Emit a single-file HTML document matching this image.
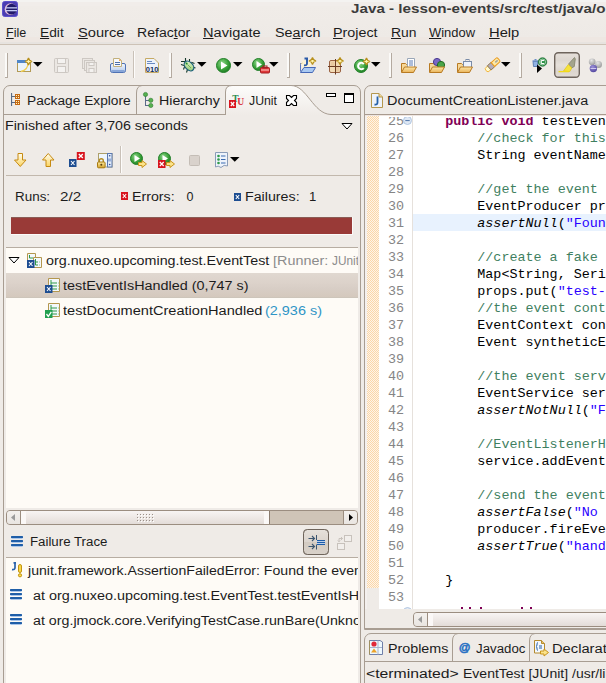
<!DOCTYPE html><html><head><meta charset="utf-8"><style>
html,body{margin:0;padding:0;}
body{width:606px;height:683px;overflow:hidden;position:relative;background:#efebe7;font-family:"Liberation Sans",sans-serif;}
</style></head><body>
<div style="position:absolute;left:0px;top:0px;width:606px;height:2px;background:#f4f3f1"></div>
<div style="position:absolute;left:0px;top:2px;width:606px;height:4px;background:#f1edea"></div>
<div style="position:absolute;left:0px;top:6px;width:606px;height:31px;background:linear-gradient(#f0ece8,#eeeae6)"></div>
<div style="position:absolute;left:0px;top:37px;width:606px;height:5px;background:#eee7e2"></div>
<div style="position:absolute;left:0px;top:42px;width:606px;height:2px;background:#e7e3df"></div>
<div style="position:absolute;left:0px;top:44px;width:606px;height:1px;background:#cdc2b6"></div>
<div style="position:absolute;left:0px;top:45px;width:606px;height:40px;background:#efebe7"></div>
<svg style="position:absolute;left:2px;top:1px;overflow:visible;" width="16" height="16" viewBox="0 0 16 16"><rect x="0.5" y="0.5" width="15" height="15" rx="2.2" fill="#4a3db2" stroke="#5d52cc"/>
<circle cx="8.6" cy="8.2" r="5.9" fill="#e4bcd6"/><circle cx="9.6" cy="8.2" r="5.4" fill="#211a6c"/>
<rect x="3.6" y="6.2" width="11.4" height="1.3" fill="#c3caf4"/><rect x="3.6" y="9" width="11.4" height="1.3" fill="#c3caf4"/></svg>
<div style="position:absolute;left:351.10px;top:1px;font-family:'Liberation Sans';font-size:12.5px;line-height:16px;font-weight:700;font-style:normal;color:#3c3c3c;white-space:pre;transform-origin:0 0;transform:scaleX(1.2169);">Java - lesson-events/src/test/java/org/nuxeo/upcoming/test/EventTest.java - Eclipse</div>
<div style="position:absolute;left:6.29px;top:25px;font-family:'Liberation Sans';font-size:12.5px;line-height:16px;font-weight:400;font-style:normal;color:#1c1c1c;white-space:pre;transform-origin:0 0;transform:scaleX(1.0053);"><span style="text-decoration:underline;text-decoration-thickness:1px;text-underline-offset:0.6px">F</span>ile</div>
<div style="position:absolute;left:40.20px;top:25px;font-family:'Liberation Sans';font-size:12.5px;line-height:16px;font-weight:400;font-style:normal;color:#1c1c1c;white-space:pre;transform-origin:0 0;transform:scaleX(1.1000);"><span style="text-decoration:underline;text-decoration-thickness:1px;text-underline-offset:0.6px">E</span>dit</div>
<div style="position:absolute;left:78.03px;top:25px;font-family:'Liberation Sans';font-size:12.5px;line-height:16px;font-weight:400;font-style:normal;color:#1c1c1c;white-space:pre;transform-origin:0 0;transform:scaleX(1.1737);"><span style="text-decoration:underline;text-decoration-thickness:1px;text-underline-offset:0.6px">S</span>ource</div>
<div style="position:absolute;left:136.87px;top:25px;font-family:'Liberation Sans';font-size:12.5px;line-height:16px;font-weight:400;font-style:normal;color:#1c1c1c;white-space:pre;transform-origin:0 0;transform:scaleX(1.1261);">Refac<span style="text-decoration:underline;text-decoration-thickness:1px;text-underline-offset:0.6px">t</span>or</div>
<div style="position:absolute;left:202.83px;top:25px;font-family:'Liberation Sans';font-size:12.5px;line-height:16px;font-weight:400;font-style:normal;color:#1c1c1c;white-space:pre;transform-origin:0 0;transform:scaleX(1.1667);"><span style="text-decoration:underline;text-decoration-thickness:1px;text-underline-offset:0.6px">N</span>avigate</div>
<div style="position:absolute;left:274.75px;top:25px;font-family:'Liberation Sans';font-size:12.5px;line-height:16px;font-weight:400;font-style:normal;color:#1c1c1c;white-space:pre;transform-origin:0 0;transform:scaleX(1.1474);">Se<span style="text-decoration:underline;text-decoration-thickness:1px;text-underline-offset:0.6px">a</span>rch</div>
<div style="position:absolute;left:332.56px;top:25px;font-family:'Liberation Sans';font-size:12.5px;line-height:16px;font-weight:400;font-style:normal;color:#1c1c1c;white-space:pre;transform-origin:0 0;transform:scaleX(1.1447);"><span style="text-decoration:underline;text-decoration-thickness:1px;text-underline-offset:0.6px">P</span>roject</div>
<div style="position:absolute;left:390.89px;top:25px;font-family:'Liberation Sans';font-size:12.5px;line-height:16px;font-weight:400;font-style:normal;color:#1c1c1c;white-space:pre;transform-origin:0 0;transform:scaleX(1.1095);"><span style="text-decoration:underline;text-decoration-thickness:1px;text-underline-offset:0.6px">R</span>un</div>
<div style="position:absolute;left:428.90px;top:25px;font-family:'Liberation Sans';font-size:12.5px;line-height:16px;font-weight:400;font-style:normal;color:#1c1c1c;white-space:pre;transform-origin:0 0;transform:scaleX(1.0356);"><span style="text-decoration:underline;text-decoration-thickness:1px;text-underline-offset:0.6px">W</span>indow</div>
<div style="position:absolute;left:488.92px;top:25px;font-family:'Liberation Sans';font-size:12.5px;line-height:16px;font-weight:400;font-style:normal;color:#1c1c1c;white-space:pre;transform-origin:0 0;transform:scaleX(1.1792);"><span style="text-decoration:underline;text-decoration-thickness:1px;text-underline-offset:0.6px">H</span>elp</div>
<div style="position:absolute;left:5px;top:53px;width:2px;height:24px;background:#fbfaf8;border-right:1px solid #b4aaa0;border-bottom:1px solid #b4aaa0"></div>
<div style="position:absolute;left:169px;top:53px;width:2px;height:24px;background:#fbfaf8;border-right:1px solid #b4aaa0;border-bottom:1px solid #b4aaa0"></div>
<div style="position:absolute;left:287px;top:53px;width:2px;height:24px;background:#fbfaf8;border-right:1px solid #b4aaa0;border-bottom:1px solid #b4aaa0"></div>
<div style="position:absolute;left:389px;top:53px;width:2px;height:24px;background:#fbfaf8;border-right:1px solid #b4aaa0;border-bottom:1px solid #b4aaa0"></div>
<div style="position:absolute;left:519px;top:53px;width:2px;height:24px;background:#fbfaf8;border-right:1px solid #b4aaa0;border-bottom:1px solid #b4aaa0"></div>
<div style="position:absolute;left:133px;top:51px;width:1px;height:27px;background:#c9c1b8"></div>
<div style="position:absolute;left:134px;top:51px;width:1px;height:27px;background:#fdfcfb"></div>
<div style="position:absolute;left:3px;top:85px;width:358px;height:620px;border:1px solid #a89d92;border-radius:7px 7px 0 0;box-sizing:border-box;background:#efebe7"></div>
<div style="position:absolute;left:4px;top:114px;width:221px;height:1px;background:#a89d92"></div>
<div style="position:absolute;left:331px;top:114px;width:29px;height:1px;background:#a89d92"></div>
<svg style="position:absolute;left:225px;top:85px;overflow:visible;" width="110" height="30" viewBox="0 0 110 30"><defs><linearGradient id="ag" x1="0" y1="0" x2="0" y2="1"><stop offset="0" stop-color="#fdfcfb"/><stop offset="1" stop-color="#efebe7"/></linearGradient></defs><path d="M0.5 30 L0.5 7 Q0.5 0.5 7 0.5 L66 0.5 C82 0.5 88 29 106 29.5 L110 29.5 L110 30 Z" fill="url(#ag)"/><path d="M0.5 30 L0.5 7 Q0.5 0.5 7 0.5 L66 0.5 C82 0.5 88 29 106 29.5 L110 29.5" fill="none" stroke="#a89d92"/></svg>
<svg style="position:absolute;left:136px;top:85px;overflow:visible;" width="8" height="30" viewBox="0 0 8 30"><path d="M0.5 30 L0.5 8 Q0.5 1 6 0.5" fill="none" stroke="#a89d92"/></svg>
<div style="position:absolute;left:26.60px;top:93px;font-family:'Liberation Sans';font-size:12.5px;line-height:16px;font-weight:400;font-style:normal;color:#1c1c1c;white-space:pre;transform-origin:0 0;transform:scaleX(1.0968);">Package Explore</div>
<div style="position:absolute;left:159.46px;top:93px;font-family:'Liberation Sans';font-size:12.5px;line-height:16px;font-weight:400;font-style:normal;color:#1c1c1c;white-space:pre;transform-origin:0 0;transform:scaleX(1.1377);">Hierarchy</div>
<div style="position:absolute;left:248.50px;top:93px;font-family:'Liberation Sans';font-size:12.5px;line-height:16px;font-weight:400;font-style:normal;color:#1c1c1c;white-space:pre;transform-origin:0 0;transform:scaleX(0.9828);">JUnit</div>
<svg style="position:absolute;left:286px;top:95px;overflow:visible;" width="11" height="11" viewBox="0 0 11 11"><path d="M0.5 0.5 L3.5 0.5 L5.5 2.5 L7.5 0.5 L10.5 0.5 L10.5 3.5 L8.5 5.5 L10.5 7.5 L10.5 10.5 L7.5 10.5 L5.5 8.5 L3.5 10.5 L0.5 10.5 L0.5 7.5 L2.5 5.5 L0.5 3.5 Z" fill="#fff" stroke="#000" stroke-width="1.1"/></svg>
<div style="position:absolute;left:326px;top:93px;width:10px;height:4px;border:1px solid #000;background:#fff;box-sizing:border-box"></div>
<div style="position:absolute;left:344px;top:93px;width:10px;height:10px;border:1px solid #000;border-top-width:2px;background:#fff;box-sizing:border-box"></div>
<div style="position:absolute;left:5.16px;top:118px;font-family:'Liberation Sans';font-size:12.5px;line-height:16px;font-weight:400;font-style:normal;color:#1c1c1c;white-space:pre;transform-origin:0 0;transform:scaleX(1.1396);">Finished after 3,706 seconds</div>
<svg style="position:absolute;left:341px;top:123px;overflow:visible;" width="12" height="7" viewBox="0 0 12 7"><path d="M1 0.5 L11 0.5 L6 6 Z" fill="#fff" stroke="#000"/></svg>
<div style="position:absolute;left:6px;top:175px;width:354px;height:1px;background:#c2b8ad"></div>
<div style="position:absolute;left:120px;top:146px;width:1px;height:27px;background:#c9c1b8"></div>
<div style="position:absolute;left:121px;top:146px;width:1px;height:27px;background:#fdfcfb"></div>
<div style="position:absolute;left:15.13px;top:189px;font-family:'Liberation Sans';font-size:12.5px;line-height:16px;font-weight:400;font-style:normal;color:#1c1c1c;white-space:pre;transform-origin:0 0;transform:scaleX(1.0742);">Runs:</div>
<div style="position:absolute;left:60.19px;top:189px;font-family:'Liberation Sans';font-size:12.5px;line-height:16px;font-weight:400;font-style:normal;color:#1c1c1c;white-space:pre;transform-origin:0 0;transform:scaleX(1.2125);">2/2</div>
<div style="position:absolute;left:132.26px;top:189px;font-family:'Liberation Sans';font-size:12.5px;line-height:16px;font-weight:400;font-style:normal;color:#1c1c1c;white-space:pre;transform-origin:0 0;transform:scaleX(1.1361);">Errors:</div>
<div style="position:absolute;left:186.60px;top:189px;font-family:'Liberation Sans';font-size:12.5px;line-height:16px;font-weight:400;font-style:normal;color:#1c1c1c;white-space:pre;transform-origin:0 0;transform:scaleX(1.0000);">0</div>
<div style="position:absolute;left:244.56px;top:189px;font-family:'Liberation Sans';font-size:12.5px;line-height:16px;font-weight:400;font-style:normal;color:#1c1c1c;white-space:pre;transform-origin:0 0;transform:scaleX(1.1391);">Failures:</div>
<div style="position:absolute;left:308.65px;top:189px;font-family:'Liberation Sans';font-size:12.5px;line-height:16px;font-weight:400;font-style:normal;color:#1c1c1c;white-space:pre;transform-origin:0 0;transform:scaleX(1.0500);">1</div>
<div style="position:absolute;left:11px;top:217px;width:341px;height:17px;background:#993a37;border-top:1px solid #8a5c55;box-sizing:border-box"></div>
<div style="position:absolute;left:11px;top:234px;width:342px;height:1px;background:#fbfaf9"></div>
<div style="position:absolute;left:352px;top:217px;width:1px;height:18px;background:#fbfaf9"></div>
<div style="position:absolute;left:6px;top:247px;width:352px;height:1px;background:#b7ada2"></div>
<div style="position:absolute;left:6px;top:248px;width:352px;height:260px;background:#fefbf6"></div>
<div style="position:absolute;left:6px;top:273px;width:352px;height:25px;background:linear-gradient(#e0d8d0,#dcd2ca 40%,#d8cec6 60%,#d4c8bc)"></div>
<div style="position:absolute;left:6px;top:297px;width:352px;height:1px;background:#cdc5ba"></div>
<div style="position:absolute;left:45.50px;top:253px;font-family:'Liberation Sans';font-size:12.5px;line-height:16px;font-weight:400;font-style:normal;color:#1c1c1c;white-space:pre;transform-origin:0 0;transform:scaleX(1.1436);">org.nuxeo.upcoming.test.EventTest</div>
<div style="position:absolute;left:6px;top:248px;width:352px;height:260px;overflow:hidden"><div style="position:absolute;left:267.45px;top:5px;font-family:'Liberation Sans';font-size:12.5px;line-height:16px;font-weight:400;font-style:normal;color:#8c8c8c;white-space:pre;transform-origin:0 0;transform:scaleX(1.1522);">[Runner:</div></div>
<div style="position:absolute;left:6px;top:248px;width:352px;height:260px;overflow:hidden"><div style="position:absolute;left:325.50px;top:5px;font-family:'Liberation Sans';font-size:12.5px;line-height:16px;font-weight:400;font-style:normal;color:#8c8c8c;white-space:pre;transform-origin:0 0;transform:scaleX(0.9458);">JUnit 3]</div></div>
<div style="position:absolute;left:62.70px;top:278px;font-family:'Liberation Sans';font-size:12.5px;line-height:16px;font-weight:400;font-style:normal;color:#1c1c1c;white-space:pre;transform-origin:0 0;transform:scaleX(1.1503);">testEventIsHandled (0,747 s)</div>
<div style="position:absolute;left:62.70px;top:303px;font-family:'Liberation Sans';font-size:12.5px;line-height:16px;font-weight:400;font-style:normal;color:#1c1c1c;white-space:pre;transform-origin:0 0;transform:scaleX(1.1665);">testDocumentCreationHandled</div>
<div style="position:absolute;left:265.15px;top:303px;font-family:'Liberation Sans';font-size:12.5px;line-height:16px;font-weight:400;font-style:normal;color:#2f95c6;white-space:pre;transform-origin:0 0;transform:scaleX(1.1542);">(2,936 s)</div>
<svg style="position:absolute;left:8px;top:257px;overflow:visible;" width="12" height="7" viewBox="0 0 12 7"><path d="M1 0.5 L11 0.5 L6 6 Z" fill="#fff" stroke="#000"/></svg>
<div style="position:absolute;left:29.54px;top:534px;font-family:'Liberation Sans';font-size:12.5px;line-height:16px;font-weight:400;font-style:normal;color:#1c1c1c;white-space:pre;transform-origin:0 0;transform:scaleX(1.0611);">Failure Trace</div>
<div style="position:absolute;left:303px;top:529px;width:26px;height:26px;border:1px solid #8f857a;border-radius:4px;box-sizing:border-box;background:linear-gradient(#ddd6cf,#d4ccc3)"></div>
<div style="position:absolute;left:6px;top:557px;width:352px;height:1px;background:#b7ada2"></div>
<div style="position:absolute;left:6px;top:558px;width:352px;height:130px;background:#fefbf6"></div>
<div style="position:absolute;left:6px;top:558px;width:352px;height:130px;overflow:hidden"><div style="position:absolute;left:22.10px;top:5px;font-family:'Liberation Sans';font-size:12.5px;line-height:16px;font-weight:400;font-style:normal;color:#1c1c1c;white-space:pre;transform-origin:0 0;transform:scaleX(1.1279);">junit.framework.AssertionFailedError: Found the event</div></div>
<div style="position:absolute;left:6px;top:558px;width:352px;height:130px;overflow:hidden"><div style="position:absolute;left:26.80px;top:30px;font-family:'Liberation Sans';font-size:12.5px;line-height:16px;font-weight:400;font-style:normal;color:#1c1c1c;white-space:pre;transform-origin:0 0;transform:scaleX(1.1500);">at org.nuxeo.upcoming.test.EventTest.testEventIsHandled</div></div>
<div style="position:absolute;left:6px;top:558px;width:352px;height:130px;overflow:hidden"><div style="position:absolute;left:26.80px;top:55px;font-family:'Liberation Sans';font-size:12.5px;line-height:16px;font-weight:400;font-style:normal;color:#1c1c1c;white-space:pre;transform-origin:0 0;transform:scaleX(1.1397);">at org.jmock.core.VerifyingTestCase.runBare(Unknown Source)</div></div>
<div style="position:absolute;left:364px;top:85px;width:260px;height:545px;border:1px solid #a89d92;border-radius:7px 0 0 0;box-sizing:border-box;background:#efebe7"></div>
<div style="position:absolute;left:365px;top:114px;width:241px;height:1px;background:#a99b8f"></div>
<div style="position:absolute;left:365px;top:115px;width:241px;height:1px;background:#efe6e1"></div>
<div style="position:absolute;left:386.85px;top:93px;font-family:'Liberation Sans';font-size:12.5px;line-height:16px;font-weight:400;font-style:normal;color:#1c1c1c;white-space:pre;transform-origin:0 0;transform:scaleX(1.1543);">DocumentCreationListener.java</div>
<div style="position:absolute;left:365px;top:116px;width:2px;height:493px;background:#f4f0ee"></div>
<div style="position:absolute;left:367px;top:116px;width:12px;height:472px;background:repeating-conic-gradient(#fbd7a8 0 25%, #fef4e9 0 50%) 0 0/2px 2px"></div>
<div style="position:absolute;left:379px;top:116px;width:227px;height:493px;background:#fff"></div>
<div style="position:absolute;left:412px;top:116px;width:1px;height:493px;background:#e6e1dc"></div>
<div style="position:absolute;left:413px;top:214px;width:193px;height:17px;background:#e8f2fe"></div>
<div style="position:absolute;left:365px;top:117px;width:241px;height:492px;overflow:hidden">
<div style="position:absolute;left:-365px;top:-117px;width:606px;height:700px">
<div style="position:absolute;left:371px;width:33px;text-align:right;top:113px;font-family:'Liberation Mono';font-size:13.4px;line-height:17px;color:#858585">25</div>
<div style="position:absolute;left:413px;top:113px;font-family:'Liberation Mono';font-size:13.4px;line-height:17px;white-space:pre;color:#000">    <b style="color:#7f0055">public void</b> testEventIsHandled() {</div>
<div style="position:absolute;left:371px;width:33px;text-align:right;top:130px;font-family:'Liberation Mono';font-size:13.4px;line-height:17px;color:#858585">26</div>
<div style="position:absolute;left:413px;top:130px;font-family:'Liberation Mono';font-size:13.4px;line-height:17px;white-space:pre;color:#000">        <span style="color:#3f7f5f">//check for this event</span></div>
<div style="position:absolute;left:371px;width:33px;text-align:right;top:147px;font-family:'Liberation Mono';font-size:13.4px;line-height:17px;color:#858585">27</div>
<div style="position:absolute;left:413px;top:147px;font-family:'Liberation Mono';font-size:13.4px;line-height:17px;white-space:pre;color:#000">        String eventName = &quot;test&quot;;</div>
<div style="position:absolute;left:371px;width:33px;text-align:right;top:164px;font-family:'Liberation Mono';font-size:13.4px;line-height:17px;color:#858585">28</div>
<div style="position:absolute;left:371px;width:33px;text-align:right;top:181px;font-family:'Liberation Mono';font-size:13.4px;line-height:17px;color:#858585">29</div>
<div style="position:absolute;left:413px;top:181px;font-family:'Liberation Mono';font-size:13.4px;line-height:17px;white-space:pre;color:#000">        <span style="color:#3f7f5f">//get the event producer</span></div>
<div style="position:absolute;left:371px;width:33px;text-align:right;top:198px;font-family:'Liberation Mono';font-size:13.4px;line-height:17px;color:#858585">30</div>
<div style="position:absolute;left:413px;top:198px;font-family:'Liberation Mono';font-size:13.4px;line-height:17px;white-space:pre;color:#000">        EventProducer producer = </div>
<div style="position:absolute;left:371px;width:33px;text-align:right;top:215px;font-family:'Liberation Mono';font-size:13.4px;line-height:17px;color:#858585">31</div>
<div style="position:absolute;left:413px;top:215px;font-family:'Liberation Mono';font-size:13.4px;line-height:17px;white-space:pre;color:#000">        <i>assertNull</i>(<span style="color:#2a00ff">&quot;Found the event&quot;</span></div>
<div style="position:absolute;left:371px;width:33px;text-align:right;top:232px;font-family:'Liberation Mono';font-size:13.4px;line-height:17px;color:#858585">32</div>
<div style="position:absolute;left:371px;width:33px;text-align:right;top:249px;font-family:'Liberation Mono';font-size:13.4px;line-height:17px;color:#858585">33</div>
<div style="position:absolute;left:413px;top:249px;font-family:'Liberation Mono';font-size:13.4px;line-height:17px;white-space:pre;color:#000">        <span style="color:#3f7f5f">//create a fake event</span></div>
<div style="position:absolute;left:371px;width:33px;text-align:right;top:266px;font-family:'Liberation Mono';font-size:13.4px;line-height:17px;color:#858585">34</div>
<div style="position:absolute;left:413px;top:266px;font-family:'Liberation Mono';font-size:13.4px;line-height:17px;white-space:pre;color:#000">        Map&lt;String, Serializable&gt;</div>
<div style="position:absolute;left:371px;width:33px;text-align:right;top:283px;font-family:'Liberation Mono';font-size:13.4px;line-height:17px;color:#858585">35</div>
<div style="position:absolute;left:413px;top:283px;font-family:'Liberation Mono';font-size:13.4px;line-height:17px;white-space:pre;color:#000">        props.put(<span style="color:#2a00ff">&quot;test-key&quot;</span></div>
<div style="position:absolute;left:371px;width:33px;text-align:right;top:300px;font-family:'Liberation Mono';font-size:13.4px;line-height:17px;color:#858585">36</div>
<div style="position:absolute;left:413px;top:300px;font-family:'Liberation Mono';font-size:13.4px;line-height:17px;white-space:pre;color:#000">        <span style="color:#3f7f5f">//the event context</span></div>
<div style="position:absolute;left:371px;width:33px;text-align:right;top:317px;font-family:'Liberation Mono';font-size:13.4px;line-height:17px;color:#858585">37</div>
<div style="position:absolute;left:413px;top:317px;font-family:'Liberation Mono';font-size:13.4px;line-height:17px;white-space:pre;color:#000">        EventContext context</div>
<div style="position:absolute;left:371px;width:33px;text-align:right;top:334px;font-family:'Liberation Mono';font-size:13.4px;line-height:17px;color:#858585">38</div>
<div style="position:absolute;left:413px;top:334px;font-family:'Liberation Mono';font-size:13.4px;line-height:17px;white-space:pre;color:#000">        Event syntheticEvent</div>
<div style="position:absolute;left:371px;width:33px;text-align:right;top:351px;font-family:'Liberation Mono';font-size:13.4px;line-height:17px;color:#858585">39</div>
<div style="position:absolute;left:371px;width:33px;text-align:right;top:368px;font-family:'Liberation Mono';font-size:13.4px;line-height:17px;color:#858585">40</div>
<div style="position:absolute;left:413px;top:368px;font-family:'Liberation Mono';font-size:13.4px;line-height:17px;white-space:pre;color:#000">        <span style="color:#3f7f5f">//the event service</span></div>
<div style="position:absolute;left:371px;width:33px;text-align:right;top:385px;font-family:'Liberation Mono';font-size:13.4px;line-height:17px;color:#858585">41</div>
<div style="position:absolute;left:413px;top:385px;font-family:'Liberation Mono';font-size:13.4px;line-height:17px;white-space:pre;color:#000">        EventService service</div>
<div style="position:absolute;left:371px;width:33px;text-align:right;top:402px;font-family:'Liberation Mono';font-size:13.4px;line-height:17px;color:#858585">42</div>
<div style="position:absolute;left:413px;top:402px;font-family:'Liberation Mono';font-size:13.4px;line-height:17px;white-space:pre;color:#000">        <i>assertNotNull</i>(<span style="color:#2a00ff">&quot;Found&quot;</span></div>
<div style="position:absolute;left:371px;width:33px;text-align:right;top:419px;font-family:'Liberation Mono';font-size:13.4px;line-height:17px;color:#858585">43</div>
<div style="position:absolute;left:371px;width:33px;text-align:right;top:436px;font-family:'Liberation Mono';font-size:13.4px;line-height:17px;color:#858585">44</div>
<div style="position:absolute;left:413px;top:436px;font-family:'Liberation Mono';font-size:13.4px;line-height:17px;white-space:pre;color:#000">        <span style="color:#3f7f5f">//EventListenerHandler</span></div>
<div style="position:absolute;left:371px;width:33px;text-align:right;top:453px;font-family:'Liberation Mono';font-size:13.4px;line-height:17px;color:#858585">45</div>
<div style="position:absolute;left:413px;top:453px;font-family:'Liberation Mono';font-size:13.4px;line-height:17px;white-space:pre;color:#000">        service.addEventListener</div>
<div style="position:absolute;left:371px;width:33px;text-align:right;top:470px;font-family:'Liberation Mono';font-size:13.4px;line-height:17px;color:#858585">46</div>
<div style="position:absolute;left:371px;width:33px;text-align:right;top:487px;font-family:'Liberation Mono';font-size:13.4px;line-height:17px;color:#858585">47</div>
<div style="position:absolute;left:413px;top:487px;font-family:'Liberation Mono';font-size:13.4px;line-height:17px;white-space:pre;color:#000">        <span style="color:#3f7f5f">//send the event</span></div>
<div style="position:absolute;left:371px;width:33px;text-align:right;top:504px;font-family:'Liberation Mono';font-size:13.4px;line-height:17px;color:#858585">48</div>
<div style="position:absolute;left:413px;top:504px;font-family:'Liberation Mono';font-size:13.4px;line-height:17px;white-space:pre;color:#000">        <i>assertFalse</i>(<span style="color:#2a00ff">&quot;No event&quot;</span></div>
<div style="position:absolute;left:371px;width:33px;text-align:right;top:521px;font-family:'Liberation Mono';font-size:13.4px;line-height:17px;color:#858585">49</div>
<div style="position:absolute;left:413px;top:521px;font-family:'Liberation Mono';font-size:13.4px;line-height:17px;white-space:pre;color:#000">        producer.fireEvent</div>
<div style="position:absolute;left:371px;width:33px;text-align:right;top:538px;font-family:'Liberation Mono';font-size:13.4px;line-height:17px;color:#858585">50</div>
<div style="position:absolute;left:413px;top:538px;font-family:'Liberation Mono';font-size:13.4px;line-height:17px;white-space:pre;color:#000">        <i>assertTrue</i>(<span style="color:#2a00ff">&quot;handled&quot;</span></div>
<div style="position:absolute;left:371px;width:33px;text-align:right;top:555px;font-family:'Liberation Mono';font-size:13.4px;line-height:17px;color:#858585">51</div>
<div style="position:absolute;left:371px;width:33px;text-align:right;top:572px;font-family:'Liberation Mono';font-size:13.4px;line-height:17px;color:#858585">52</div>
<div style="position:absolute;left:413px;top:572px;font-family:'Liberation Mono';font-size:13.4px;line-height:17px;white-space:pre;color:#000">    }</div>
<div style="position:absolute;left:371px;width:33px;text-align:right;top:589px;font-family:'Liberation Mono';font-size:13.4px;line-height:17px;color:#858585">53</div>
<div style="position:absolute;left:371px;width:33px;text-align:right;top:606px;font-family:'Liberation Mono';font-size:13.4px;line-height:17px;color:#858585">54</div>
<div style="position:absolute;left:413px;top:606px;font-family:'Liberation Mono';font-size:13.4px;line-height:17px;white-space:pre;color:#000">    <b style="color:#7f0055">public void</b> testDocument</div>
<svg style="position:absolute;left:403px;top:116px;overflow:visible;" width="9" height="9" viewBox="0 0 9 9"><circle cx="4.5" cy="4.5" r="4" fill="#dfe8f4" stroke="#a9bfdc" stroke-width="0.9"/><rect x="2.3" y="4" width="4.4" height="1.1" fill="#5b7fb0"/></svg>
<svg style="position:absolute;left:403px;top:607px;overflow:visible;" width="9" height="9" viewBox="0 0 9 9"><circle cx="4.5" cy="4.5" r="4" fill="#dfe8f4" stroke="#a9bfdc" stroke-width="0.9"/><rect x="2.3" y="4" width="4.4" height="1.1" fill="#5b7fb0"/></svg>
</div></div>
<div style="position:absolute;left:461px;top:607px;width:2px;height:2px;background:#7f0055"></div>
<div style="position:absolute;left:469px;top:607px;width:2px;height:2px;background:#7f0055"></div>
<div style="position:absolute;left:480px;top:607px;width:2px;height:2px;background:#7f0055"></div>
<div style="position:absolute;left:521px;top:607px;width:2px;height:2px;background:#7f0055"></div>
<div style="position:absolute;left:530px;top:607px;width:2px;height:2px;background:#7f0055"></div>
<div style="position:absolute;left:413px;top:612px;width:227px;height:15px;border:1px solid #9b8d80;border-radius:4px;box-sizing:border-box;background:#cfc4b7"></div>
<div style="position:absolute;left:414px;top:613px;width:14px;height:13px;background:linear-gradient(#f3f0ed,#e9e5e1);border-radius:3px 0 0 3px"></div>
<div style="position:absolute;left:427px;top:613px;width:1px;height:13px;background:#9b8d80"></div>
<svg style="position:absolute;left:418px;top:616px;overflow:visible;" width="4" height="7" viewBox="0 0 4 7"><path d="M4 0 L4 7 L0 3.5 Z" fill="#9a9a9a"/></svg>
<div style="position:absolute;left:428px;top:613px;width:212px;height:13px;background:linear-gradient(#f8f4f3,#ece6e3 60%,#e3dcd8)"></div>
<div style="position:absolute;left:428px;top:613px;width:5px;height:13px;background:#fbf8f7"></div>
<div style="position:absolute;left:635px;top:613px;width:5px;height:13px;background:#fbf8f7"></div>
<div style="position:absolute;left:640px;top:613px;width:1px;height:13px;background:#8a7b6e"></div>
<div style="position:absolute;left:365px;top:628px;width:241px;height:1px;background:#a89d92"></div>
<div style="position:absolute;left:364px;top:633px;width:260px;height:60px;border:1px solid #a89d92;border-radius:7px 0 0 0;box-sizing:border-box;background:#efebe7"></div>
<div style="position:absolute;left:365px;top:661px;width:241px;height:1px;background:#a89d92"></div>
<svg style="position:absolute;left:452px;top:633px;overflow:visible;" width="8" height="29" viewBox="0 0 8 29"><path d="M0.5 29 L0.5 8 Q0.5 1 6 0.5" fill="none" stroke="#a89d92"/></svg>
<svg style="position:absolute;left:529px;top:633px;overflow:visible;" width="8" height="29" viewBox="0 0 8 29"><path d="M0.5 29 L0.5 8 Q0.5 1 6 0.5" fill="none" stroke="#a89d92"/></svg>
<div style="position:absolute;left:387.56px;top:641px;font-family:'Liberation Sans';font-size:12.5px;line-height:16px;font-weight:400;font-style:normal;color:#1c1c1c;white-space:pre;transform-origin:0 0;transform:scaleX(1.1431);">Problems</div>
<div style="position:absolute;left:475.60px;top:641px;font-family:'Liberation Sans';font-size:12.5px;line-height:16px;font-weight:400;font-style:normal;color:#1c1c1c;white-space:pre;transform-origin:0 0;transform:scaleX(1.0609);">Javadoc</div>
<div style="position:absolute;left:551.72px;top:641px;font-family:'Liberation Sans';font-size:12.5px;line-height:16px;font-weight:400;font-style:normal;color:#1c1c1c;white-space:pre;transform-origin:0 0;transform:scaleX(1.1761);">Declaration</div>
<div style="position:absolute;left:365.94px;top:666px;font-family:'Liberation Sans';font-size:12.5px;line-height:16px;font-weight:400;font-style:normal;color:#1c1c1c;white-space:pre;transform-origin:0 0;transform:scaleX(1.2597);">&lt;terminated&gt;</div>
<div style="position:absolute;left:462.68px;top:666px;font-family:'Liberation Sans';font-size:12.5px;line-height:16px;font-weight:400;font-style:normal;color:#1c1c1c;white-space:pre;transform-origin:0 0;transform:scaleX(1.1207);">EventTest [JUnit] /usr/lib/jvm/java-6-sun/bin/java</div>
<div style="position:absolute;left:6px;top:510px;width:352px;height:15px;border:1px solid #9b8d80;border-radius:4px;box-sizing:border-box;background:#cfc4b7"></div>
<div style="position:absolute;left:7px;top:511px;width:14px;height:13px;background:linear-gradient(#f3f0ed,#e9e5e1);border-radius:3px 0 0 3px"></div>
<div style="position:absolute;left:20px;top:511px;width:1px;height:13px;background:#9b8d80"></div>
<svg style="position:absolute;left:11px;top:514px;overflow:visible;" width="4" height="7" viewBox="0 0 4 7"><path d="M4 0 L4 7 L0 3.5 Z" fill="#9a9a9a"/></svg>
<div style="position:absolute;left:21px;top:511px;width:248px;height:13px;background:linear-gradient(#f8f4f3,#ece6e3 60%,#e3dcd8)"></div>
<div style="position:absolute;left:21px;top:511px;width:5px;height:13px;background:#fbf8f7"></div>
<div style="position:absolute;left:264px;top:511px;width:5px;height:13px;background:#fbf8f7"></div>
<div style="position:absolute;left:269px;top:511px;width:1px;height:13px;background:#8a7b6e"></div>
<div style="position:absolute;left:343px;top:511px;width:1px;height:13px;background:#9b8d80"></div>
<div style="position:absolute;left:344px;top:511px;width:13px;height:13px;background:linear-gradient(#f3f0ed,#e9e5e1);border-radius:0 3px 3px 0"></div>
<svg style="position:absolute;left:349px;top:514px;overflow:visible;" width="4" height="7" viewBox="0 0 4 7"><path d="M0 0 L0 7 L4 3.5 Z" fill="#000"/></svg>
<div style="position:absolute;left:137px;top:514px;width:1px;height:1px;background:#9a9089"></div>
<div style="position:absolute;left:138px;top:515px;width:1px;height:1px;background:#fff"></div>
<div style="position:absolute;left:137px;top:517px;width:1px;height:1px;background:#9a9089"></div>
<div style="position:absolute;left:138px;top:518px;width:1px;height:1px;background:#fff"></div>
<div style="position:absolute;left:137px;top:520px;width:1px;height:1px;background:#9a9089"></div>
<div style="position:absolute;left:138px;top:521px;width:1px;height:1px;background:#fff"></div>
<div style="position:absolute;left:140px;top:514px;width:1px;height:1px;background:#9a9089"></div>
<div style="position:absolute;left:141px;top:515px;width:1px;height:1px;background:#fff"></div>
<div style="position:absolute;left:140px;top:517px;width:1px;height:1px;background:#9a9089"></div>
<div style="position:absolute;left:141px;top:518px;width:1px;height:1px;background:#fff"></div>
<div style="position:absolute;left:140px;top:520px;width:1px;height:1px;background:#9a9089"></div>
<div style="position:absolute;left:141px;top:521px;width:1px;height:1px;background:#fff"></div>
<div style="position:absolute;left:143px;top:514px;width:1px;height:1px;background:#9a9089"></div>
<div style="position:absolute;left:144px;top:515px;width:1px;height:1px;background:#fff"></div>
<div style="position:absolute;left:143px;top:517px;width:1px;height:1px;background:#9a9089"></div>
<div style="position:absolute;left:144px;top:518px;width:1px;height:1px;background:#fff"></div>
<div style="position:absolute;left:143px;top:520px;width:1px;height:1px;background:#9a9089"></div>
<div style="position:absolute;left:144px;top:521px;width:1px;height:1px;background:#fff"></div>
<div style="position:absolute;left:146px;top:514px;width:1px;height:1px;background:#9a9089"></div>
<div style="position:absolute;left:147px;top:515px;width:1px;height:1px;background:#fff"></div>
<div style="position:absolute;left:146px;top:517px;width:1px;height:1px;background:#9a9089"></div>
<div style="position:absolute;left:147px;top:518px;width:1px;height:1px;background:#fff"></div>
<div style="position:absolute;left:146px;top:520px;width:1px;height:1px;background:#9a9089"></div>
<div style="position:absolute;left:147px;top:521px;width:1px;height:1px;background:#fff"></div>
<div style="position:absolute;left:149px;top:514px;width:1px;height:1px;background:#9a9089"></div>
<div style="position:absolute;left:150px;top:515px;width:1px;height:1px;background:#fff"></div>
<div style="position:absolute;left:149px;top:517px;width:1px;height:1px;background:#9a9089"></div>
<div style="position:absolute;left:150px;top:518px;width:1px;height:1px;background:#fff"></div>
<div style="position:absolute;left:149px;top:520px;width:1px;height:1px;background:#9a9089"></div>
<div style="position:absolute;left:150px;top:521px;width:1px;height:1px;background:#fff"></div>
<div style="position:absolute;left:152px;top:514px;width:1px;height:1px;background:#9a9089"></div>
<div style="position:absolute;left:153px;top:515px;width:1px;height:1px;background:#fff"></div>
<div style="position:absolute;left:152px;top:517px;width:1px;height:1px;background:#9a9089"></div>
<div style="position:absolute;left:153px;top:518px;width:1px;height:1px;background:#fff"></div>
<div style="position:absolute;left:152px;top:520px;width:1px;height:1px;background:#9a9089"></div>
<div style="position:absolute;left:153px;top:521px;width:1px;height:1px;background:#fff"></div>
<svg width="0" height="0" style="position:absolute"><defs>
<radialGradient id="gr" cx="0.4" cy="0.35" r="0.7"><stop offset="0" stop-color="#8fd68a"/><stop offset="0.6" stop-color="#3aa23a"/><stop offset="1" stop-color="#1d7a23"/></radialGradient>
<linearGradient id="fold" x1="0" y1="0" x2="0" y2="1"><stop offset="0" stop-color="#fde7a8"/><stop offset="1" stop-color="#e9b35a"/></linearGradient>
<linearGradient id="blu" x1="0" y1="0" x2="0" y2="1"><stop offset="0" stop-color="#9db8e6"/><stop offset="1" stop-color="#3d67b5"/></linearGradient>
</defs></svg>
<svg style="position:absolute;left:16px;top:58px;overflow:visible" width="16" height="16" viewBox="0 0 16 16"><rect x="1.5" y="2.5" width="13" height="11" fill="#eaf4fb" stroke="#b39a55"/><rect x="1" y="2" width="12" height="3" fill="#4f86c8"/><path d="M12 5 Q12 12 5 13.5" stroke="#f2cf52" stroke-width="1.3" fill="none"/><path d="M12.5 -0.10000000000000009 Q13.1 2.9 16.1 3.5 Q13.1 4.1 12.5 7.1 Q11.9 4.1 8.9 3.5 Q11.9 2.9 12.5 -0.10000000000000009 Z" fill="#fff6b0" stroke="#b8901c" stroke-width="1.2"/></svg>
<svg style="position:absolute;left:33px;top:62px;overflow:visible" width="10" height="5" viewBox="0 0 10 5"><path d="M0 0 L9.5 0 L4.75 4.75 Z" fill="#000"/></svg>
<svg style="position:absolute;left:54px;top:58px;overflow:visible" width="15" height="15" viewBox="0 0 15 15"><rect x="0.5" y="0.5" width="14" height="14" rx="1" fill="#ebe7e3" stroke="#cdc8c3"/><rect x="3.5" y="0.5" width="8" height="5" fill="#f4f2f0" stroke="#cdc8c3"/><rect x="3.5" y="8.5" width="8" height="6" fill="#f4f2f0" stroke="#cdc8c3"/></svg>
<svg style="position:absolute;left:82px;top:58px;overflow:visible" width="15" height="15" viewBox="0 0 15 15"><rect x="0.5" y="0.5" width="10" height="10" fill="#ebe7e3" stroke="#cdc8c3"/><rect x="2.5" y="2.5" width="10" height="10" fill="#ebe7e3" stroke="#cdc8c3"/><rect x="4.5" y="4.5" width="10" height="10" fill="#ebe7e3" stroke="#cdc8c3"/><rect x="7" y="4.5" width="5" height="3" fill="#f4f2f0" stroke="#cdc8c3"/><rect x="7" y="10.5" width="5" height="4" fill="#f4f2f0" stroke="#cdc8c3"/></svg>
<svg style="position:absolute;left:110px;top:58px;overflow:visible" width="16" height="15" viewBox="0 0 16 15"><defs><linearGradient id="prb" x1="0" y1="0" x2="0" y2="1"><stop offset="0" stop-color="#f4f8fe"/><stop offset="0.7" stop-color="#c6d6f0"/><stop offset="1" stop-color="#8eaad8"/></linearGradient></defs><path d="M0.5 7 Q0.5 5.5 2 5.5 L14 5.5 Q15.5 5.5 15.5 7 L15.5 12.5 Q15.5 14.5 13.5 14.5 L2.5 14.5 Q0.5 14.5 0.5 12.5 Z" fill="url(#prb)" stroke="#4f72b4"/><rect x="1.5" y="12" width="13" height="2" fill="#88a6d8"/><path d="M3.5 0.5 L9.5 0.5 L11.5 2.5 L11.5 8.5 L3.5 8.5 Z" fill="#f6f8fc" stroke="#c2b07c"/><path d="M9 0.8 L11.3 3 L9 3 Z" fill="#f0a848"/><path d="M5 4.5 L10 4.5 M5 6.5 L10 6.5" stroke="#4f6fa8" stroke-width="1.1"/></svg>
<svg style="position:absolute;left:145px;top:58px;overflow:visible" width="14" height="15" viewBox="0 0 14 15"><path d="M0.5 0.5 L9 0.5 L13.5 5 L13.5 14.5 L0.5 14.5 Z" fill="#eef3fb" stroke="#c6aa64"/><rect x="2" y="3" width="5" height="1" fill="#6a8ac0"/><rect x="2" y="5" width="8" height="1" fill="#6a8ac0"/><text x="0.8" y="13.6" font-family="Liberation Sans" font-weight="700" font-size="7.6" fill="#14305e" textLength="12.6" lengthAdjust="spacingAndGlyphs">010</text></svg>
<svg style="position:absolute;left:178px;top:55px;overflow:visible" width="22" height="21" viewBox="0 0 22 21"><defs><linearGradient id="bug" x1="0" y1="0" x2="1" y2="1"><stop offset="0" stop-color="#eef9dc"/><stop offset="1" stop-color="#86c466"/></linearGradient></defs><g stroke="#17392a" stroke-width="1.1" fill="none"><path d="M3 6.5 L7 6.5 M7.5 3 L7.5 7 M11.5 4 L11.5 6.8 M13.3 7.3 L16.5 8.5 M3 9.5 L6 10.5 M5.5 14.5 L6.8 11 M8.5 17.5 L9.5 14.5 M15 12.2 L17.5 13"/></g><ellipse cx="11" cy="11" rx="5.6" ry="3.8" transform="rotate(45 11 11)" fill="url(#bug)" stroke="#1b5f78" stroke-width="1.2"/><path d="M9.5 9.5 L13 13" stroke="#6aae4a" stroke-width="0.9"/><circle cx="8.6" cy="8.4" r="1" fill="#1a8a2a"/></svg>
<svg style="position:absolute;left:197px;top:62px;overflow:visible" width="10" height="5" viewBox="0 0 10 5"><path d="M0 0 L9.5 0 L4.75 4.75 Z" fill="#000"/></svg>
<svg style="position:absolute;left:216px;top:58px;overflow:visible" width="15" height="15" viewBox="0 0 15 15"><circle cx="7.5" cy="7.5" r="7" fill="url(#gr)" stroke="#23802a"/><path d="M5 3.5 L11.5 7.5 L5 11.5 Z" fill="#fff"/></svg>
<svg style="position:absolute;left:232.5px;top:62px;overflow:visible" width="10" height="5" viewBox="0 0 10 5"><path d="M0 0 L9.5 0 L4.75 4.75 Z" fill="#000"/></svg>
<svg style="position:absolute;left:252px;top:58px;overflow:visible" width="18" height="16" viewBox="0 0 18 16"><circle cx="6.5" cy="6.5" r="6" fill="url(#gr)" stroke="#23802a"/><path d="M4.5 3 L10 6.5 L4.5 10 Z" fill="#fff"/><rect x="8.5" y="9.5" width="9" height="5.5" rx="1" fill="#e0383a" stroke="#a51e22"/><rect x="11" y="8" width="4" height="2" fill="none" stroke="#a51e22"/><rect x="9" y="11.5" width="8" height="1" fill="#ffd0c8"/></svg>
<svg style="position:absolute;left:269px;top:62px;overflow:visible" width="10" height="5" viewBox="0 0 10 5"><path d="M0 0 L9.5 0 L4.75 4.75 Z" fill="#000"/></svg>
<svg style="position:absolute;left:296px;top:55px;overflow:visible" width="22" height="20" viewBox="0 0 22 20"><rect x="6" y="5.5" width="9" height="8" fill="#fbf3d6"/><path d="M8.5 3.5 L12 3.5 M11 3.5 L11 8.5 Q11 10.6 8 10.3" stroke="#2a5aa8" stroke-width="1.9" fill="none"/><path d="M4.5 8 L4.5 16.5" stroke="#5a78c0" stroke-width="1"/><path d="M4.5 9 L6.5 8" stroke="#d8c890"/><path d="M4.5 17.5 L8 12.5 L19.5 12.5 L16.5 17.5 Z" fill="#a9c9f2" stroke="#4668b6"/><path d="M16.5 2.4 Q17.1 5.4 20.1 6 Q17.1 6.6 16.5 9.6 Q15.9 6.6 12.9 6 Q15.9 5.4 16.5 2.4 Z" fill="#fff6b0" stroke="#b8901c" stroke-width="1.2"/></svg>
<svg style="position:absolute;left:326px;top:55px;overflow:visible" width="22" height="20" viewBox="0 0 22 20"><rect x="3.5" y="5.5" width="11" height="12" rx="1.5" fill="#f3dcb6" stroke="#9a6242"/><rect x="4.5" y="6.5" width="4" height="4.5" fill="#e9c9a0"/><rect x="9.5" y="12" width="4" height="4.5" fill="#e9c9a0"/><path d="M9.5 4 L9.5 19.5 M2 11.5 L16 11.5" stroke="#6a3c22" stroke-width="1"/><path d="M14 2.4 Q14.6 5.4 17.6 6 Q14.6 6.6 14 9.6 Q13.4 6.6 10.4 6 Q13.4 5.4 14 2.4 Z" fill="#fff6b0" stroke="#b8901c" stroke-width="1.2"/></svg>
<svg style="position:absolute;left:354px;top:58px;overflow:visible" width="17" height="15" viewBox="0 0 17 15"><circle cx="7" cy="8" r="6.5" fill="url(#gr)" stroke="#23802a"/><path d="M9.8 6 A3.2 3.2 0 1 0 9.8 10" stroke="#fff" stroke-width="2" fill="none"/><path d="M12.5 -0.10000000000000009 Q13.1 2.9 16.1 3.5 Q13.1 4.1 12.5 7.1 Q11.9 4.1 8.9 3.5 Q11.9 2.9 12.5 -0.10000000000000009 Z" fill="#fff6b0" stroke="#b8901c" stroke-width="1.2"/></svg>
<svg style="position:absolute;left:371px;top:62px;overflow:visible" width="10" height="5" viewBox="0 0 10 5"><path d="M0 0 L9.5 0 L4.75 4.75 Z" fill="#000"/></svg>
<svg style="position:absolute;left:401px;top:58px;overflow:visible" width="16" height="15" viewBox="0 0 16 15"><path d="M0.5 14 L0.5 5.5 L4.5 5.5 L5.5 6.5 L12.5 6.5 L12.5 9" fill="#f7d898" stroke="#b87a22"/><path d="M6.5 0.5 L13.5 0.5 L13.5 10 L6.5 10 Z" fill="#fff" stroke="#9aa7b8"/><path d="M8 3 L12 3 M8 5 L12 5 M8 7 L12 7" stroke="#5a7ab4"/><path d="M0.5 14.5 L3.5 9 L15.5 9 L12.5 14.5 Z" fill="url(#fold)" stroke="#b87a22" stroke-linejoin="round"/></svg>
<svg style="position:absolute;left:429px;top:58px;overflow:visible" width="17" height="15" viewBox="0 0 17 15"><path d="M0.5 14 L0.5 5.5 L4.5 5.5 L5.5 6.5 L12.5 6.5 L12.5 9" fill="#f7d898" stroke="#b87a22"/><circle cx="8" cy="4" r="3.6" fill="#7a68c6" stroke="#4a3a90"/><circle cx="12" cy="7" r="3.6" fill="#4aa44a" stroke="#206a22"/><path d="M0.5 14.5 L3.5 9 L15.5 9 L12.5 14.5 Z" fill="url(#fold)" stroke="#b87a22" stroke-linejoin="round"/></svg>
<svg style="position:absolute;left:457px;top:58px;overflow:visible" width="16" height="15" viewBox="0 0 16 15"><path d="M0.5 14 L0.5 5.5 L4.5 5.5 L5.5 6.5 L12.5 6.5 L12.5 9" fill="#f7d898" stroke="#b87a22"/><rect x="6.5" y="3.5" width="8" height="6" fill="#eef3fb" stroke="#7a8ca8"/><rect x="9" y="1.5" width="3" height="2" fill="none" stroke="#7a8ca8"/><path d="M0.5 14.5 L3.5 9 L15.5 9 L12.5 14.5 Z" fill="url(#fold)" stroke="#b87a22" stroke-linejoin="round"/></svg>
<svg style="position:absolute;left:480px;top:54px;overflow:visible" width="22" height="22" viewBox="0 0 22 22"><g transform="translate(12.2 11.2) rotate(-42)"><path d="M-3.5 -2.6 L-7.5 -2.2 Q-9 0 -7.5 2.2 L-3.5 2.6 Z" fill="#fffbd0" stroke="#f3b43a" stroke-width="0.9"/><rect x="-4" y="-2.8" width="5" height="5.6" fill="#b4adbd" stroke="#8c7446" stroke-width="0.9"/><path d="M1 -2.6 L7.5 -2.6 Q8.8 -2.6 8.8 -1.3 L8.8 1.3 Q8.8 2.6 7.5 2.6 L1 2.6 Z" fill="#fde9a6" stroke="#ea9a1e" stroke-width="1"/><circle cx="5" cy="0" r="0.6" fill="#2a4a9a"/><circle cx="6.5" cy="0" r="0.6" fill="#2a4a9a"/></g></svg>
<svg style="position:absolute;left:501px;top:62px;overflow:visible" width="10" height="5" viewBox="0 0 10 5"><path d="M0 0 L9.5 0 L4.75 4.75 Z" fill="#000"/></svg>
<svg style="position:absolute;left:528px;top:54px;overflow:visible" width="22" height="22" viewBox="0 0 22 22"><path d="M5 7.5 L10 7.5 L9.5 12.5 L5.5 12.5 Z" fill="#8fb1e4" stroke="#4a6ea8" stroke-width="0.8"/><rect x="4.5" y="6.3" width="6" height="1.4" fill="#6a8cc8"/><rect x="6.5" y="5" width="2" height="1.3" fill="#6a8cc8"/><circle cx="14.5" cy="8" r="4.3" fill="#1f8a3a" stroke="#14602a" stroke-width="0.6"/><circle cx="14.5" cy="8" r="3" fill="none" stroke="#dff2e2" stroke-width="0.7"/><path d="M16 6.8 A1.7 1.7 0 1 0 16 9.2" stroke="#fff" stroke-width="1.2" fill="none"/><path d="M9 10.5 L9 19 L14 14.5 Z" fill="#000"/></svg>
<svg style="position:absolute;left:554px;top:52px;overflow:visible" width="26" height="26" viewBox="0 0 26 26"><defs><linearGradient id="pb" x1="0" y1="0" x2="0" y2="1"><stop offset="0" stop-color="#e6e0da"/><stop offset="0.3" stop-color="#ddd7d1"/><stop offset="0.5" stop-color="#e6e0da"/><stop offset="0.75" stop-color="#dcd5ce"/><stop offset="1" stop-color="#e2dcd5"/></linearGradient></defs><rect x="0.7" y="0.7" width="24.6" height="24.6" rx="3.5" fill="url(#pb)" stroke="#6e645c" stroke-width="1.4"/><path d="M14.5 12 L20.5 5.5 L21.3 7 L20.3 14.5 L17.5 16 Z" fill="#a4a48c" stroke="#7a7a64" stroke-width="0.7"/><path d="M9.5 19 L14.3 12.5 L17.8 16 L15.8 19.5 Z" fill="#f6e23c" stroke="#e0c414" stroke-width="0.7"/><path d="M4.5 19.6 L15 19.6" stroke="#f2da18" stroke-width="1.3"/></svg>
<svg style="position:absolute;left:584px;top:54px;overflow:visible" width="22" height="22" viewBox="0 0 22 22"><defs><radialGradient id="gs" cx="0.4" cy="0.3" r="0.7"><stop offset="0" stop-color="#e6e6e6"/><stop offset="1" stop-color="#9e9e9e"/></radialGradient><radialGradient id="ps" cx="0.4" cy="0.3" r="0.7"><stop offset="0" stop-color="#9a90d8"/><stop offset="1" stop-color="#5548a0"/></radialGradient></defs><circle cx="8.2" cy="7.8" r="3.4" fill="url(#gs)"/><circle cx="14.5" cy="10.4" r="3.5" fill="url(#gs)"/><circle cx="9.4" cy="14.5" r="3.7" fill="url(#ps)"/><path d="M6.5 14.5 L12.3 14.5" stroke="#d8d2f4" stroke-width="0.9"/></svg>
<svg style="position:absolute;left:11px;top:93px;overflow:visible" width="10" height="14" viewBox="0 0 10 14"><rect x="0" y="0" width="1.1" height="13" fill="#566a88"/><rect x="1" y="3" width="3" height="1" fill="#566a88"/><rect x="1" y="9" width="3" height="1" fill="#566a88"/><rect x="4" y="1" width="5" height="5" fill="#c46a16"/><rect x="4" y="7" width="5" height="5" fill="#c46a16"/><g fill="#fff4c0"><rect x="5" y="2" width="1" height="1"/><rect x="7" y="2" width="1" height="1"/><rect x="5" y="4" width="1" height="1"/><rect x="7" y="4" width="1" height="1"/><rect x="5" y="8" width="1" height="1"/><rect x="7" y="8" width="1" height="1"/><rect x="5" y="10" width="1" height="1"/><rect x="7" y="10" width="1" height="1"/></g></svg>
<svg style="position:absolute;left:143px;top:92px;overflow:visible" width="11" height="16" viewBox="0 0 11 16"><path d="M2.5 3 L2.5 14 M2.5 8.5 L6 8.5 M2.5 13.5 L6 13.5" stroke="#5a6a8a" stroke-width="1"/><circle cx="2.5" cy="2.5" r="2.1" fill="#56b050" stroke="#2c7a2c" stroke-width="0.6"/><circle cx="7.8" cy="8.3" r="2.1" fill="#56b050" stroke="#2c7a2c" stroke-width="0.6"/><circle cx="7.8" cy="13.5" r="2.1" fill="#56b050" stroke="#2c7a2c" stroke-width="0.6"/></svg>
<svg style="position:absolute;left:228px;top:94px;overflow:visible" width="18" height="15" viewBox="0 0 18 15"><text x="4.3" y="8" font-family="Liberation Serif" font-weight="700" font-size="9.5" fill="#2a8a50">T</text><text x="9.3" y="11.3" font-family="Liberation Serif" font-weight="700" font-size="9.5" fill="#d83040">U</text><rect x="1" y="6" width="7" height="8" fill="#d8141e"/><path d="M2.8 8 L6.2 12 M6.2 8 L2.8 12" stroke="#fff" stroke-width="1.2"/></svg>
<svg style="position:absolute;left:14px;top:153px;overflow:visible" width="13" height="14" viewBox="0 0 13 14"><defs><linearGradient id="ya" x1="0" y1="0" x2="0" y2="1"><stop offset="0" stop-color="#fffdf0"/><stop offset="1" stop-color="#fbd460"/></linearGradient></defs><path d="M4 0.5 L8.5 0.5 L8.5 7 L12 7 L6.25 13.5 L0.5 7 L4 7 Z" fill="url(#ya)" stroke="#c68a12"/></svg>
<svg style="position:absolute;left:42px;top:153px;overflow:visible" width="13" height="14" viewBox="0 0 13 14"><path d="M4 13.5 L8.5 13.5 L8.5 7 L12 7 L6.25 0.5 L0.5 7 L4 7 Z" fill="url(#ya)" stroke="#c68a12"/></svg>
<svg style="position:absolute;left:69px;top:152px;overflow:visible" width="16" height="15" viewBox="0 0 16 15"><g transform="translate(0 7)"><rect x="0" y="0" width="7.5" height="8" fill="#1d4d91"/><path d="M2 2 L5.5 6 M5.5 2 L2 6" stroke="#fff" stroke-width="1.1"/></g><g transform="translate(7.8 0)"><rect x="0" y="0" width="8" height="8" fill="#d8141e"/><path d="M2 2 L6 6 M6 2 L2 6" stroke="#fff" stroke-width="1.3"/></g></svg>
<svg style="position:absolute;left:97px;top:153px;overflow:visible" width="16" height="15" viewBox="0 0 16 15"><defs><linearGradient id="lk" x1="0" y1="0" x2="0" y2="1"><stop offset="0" stop-color="#fdeaa0"/><stop offset="1" stop-color="#d4a22a"/></linearGradient></defs><rect x="1.5" y="0.5" width="13.5" height="13.5" fill="#eef6fd" stroke="#aea06a"/><rect x="10.5" y="0.5" width="4.5" height="13.5" fill="#e2ecf8" stroke="#5a78b0"/><rect x="11" y="5.5" width="3.5" height="3" fill="#9ab0d8"/><circle cx="12.7" cy="2.7" r="0.8" fill="#2a4a9a"/><circle cx="12.7" cy="11.5" r="0.8" fill="#2a4a9a"/><path d="M2.3 9.5 L2.3 7.8 Q2.3 5.8 4.3 5.8 Q6.3 5.8 6.3 7.8 L6.3 9.5" stroke="#b48c22" stroke-width="1.4" fill="none"/><rect x="0.5" y="9" width="7.6" height="5.8" rx="1" fill="url(#lk)" stroke="#a87a10"/><circle cx="4.3" cy="11.8" r="1" fill="#5a4010"/></svg>
<svg style="position:absolute;left:129.5px;top:152px;overflow:visible" width="17" height="16" viewBox="0 0 17 16"><circle cx="6.5" cy="6.5" r="6" fill="url(#gr)" stroke="#23802a"/><path d="M4.5 3 L10 6.5 L4.5 10 Z" fill="#fff"/><path d="M8.5 10.5 L12 10.5 L12 8.5 L16.5 12 L12 15.5 L12 13.5 L8.5 13.5 Z" fill="#fbe38a" stroke="#c8941c" stroke-linejoin="round"/></svg>
<svg style="position:absolute;left:157.5px;top:152px;overflow:visible" width="17" height="16" viewBox="0 0 17 16"><circle cx="6.5" cy="6.5" r="6" fill="url(#gr)" stroke="#23802a"/><path d="M4.5 3 L10 6.5 L4.5 10 Z" fill="#fff"/><path d="M8.5 10.5 L12 10.5 L12 8.5 L16.5 12 L12 15.5 L12 13.5 L8.5 13.5 Z" fill="#fbe38a" stroke="#c8941c" stroke-linejoin="round"/><rect x="0" y="8" width="7.5" height="8" fill="#d8141e"/><path d="M1.8 10 L5.7 14 M5.7 10 L1.8 14" stroke="#fff" stroke-width="1.2"/></svg>
<svg style="position:absolute;left:189px;top:155px;overflow:visible" width="11" height="11" viewBox="0 0 11 11"><rect x="0.5" y="0.5" width="10" height="10" rx="1" fill="#d9d2cc" stroke="#c4bdb6"/></svg>
<svg style="position:absolute;left:215px;top:152px;overflow:visible" width="13" height="16" viewBox="0 0 13 16"><path d="M0.5 0.5 L12.5 0.5 L12.5 14 Q9 12 6 15.5 Q3 13 0.5 15 Z" fill="#eef3fb" stroke="#8a9cb8"/><g fill="#2e9a4a"><circle cx="3.5" cy="4" r="1.3"/><circle cx="3.5" cy="7.5" r="1.3"/><circle cx="3.5" cy="11" r="1.3"/></g><path d="M6 4 L10.5 4 M6 7.5 L10.5 7.5 M6 11 L10.5 11" stroke="#3a6ab0"/></svg>
<svg style="position:absolute;left:229.5px;top:157px;overflow:visible" width="10" height="5" viewBox="0 0 10 5"><path d="M0 0 L9.5 0 L4.75 4.75 Z" fill="#000"/></svg>
<svg style="position:absolute;left:121px;top:192px;overflow:visible" width="8" height="8" viewBox="0 0 8 8"><rect x="0" y="0" width="7" height="8" fill="#d8141e"/><path d="M1.8 2 L5.2 6 M5.2 2 L1.8 6" stroke="#fff" stroke-width="1.1"/></svg>
<svg style="position:absolute;left:234px;top:192.5px;overflow:visible" width="8" height="8" viewBox="0 0 8 8"><rect x="0" y="0" width="7" height="8" fill="#1d4d91"/><path d="M1.8 2 L5.2 6 M5.2 2 L1.8 6" stroke="#fff" stroke-width="1.1"/></svg>
<svg style="position:absolute;left:27px;top:253px;overflow:visible" width="16" height="15" viewBox="0 0 16 15"><g transform="translate(0 0)"><path d="M0.5 0.5 L8.5 0.5 L8.5 10 L0.5 10 Z" fill="#f4f8fc" stroke="#b4974e"/><path d="M2.5 2 L2.5 5 L6 5" stroke="#2e9a4a" fill="none"/></g><g transform="translate(6 4)"><path d="M0.5 0.5 L8.5 0.5 L8.5 10.5 L0.5 10.5 Z" fill="#f4f8fc" stroke="#b4974e"/><path d="M2.5 2 L2.5 8 M2.5 5 L5 5 M2.5 8 L5 8" stroke="#2e9a4a"/><path d="M6.5 5 L7 5 M6.5 8 L7 8" stroke="#2e9a4a"/></g><g transform="translate(0 7)"><rect x="0" y="0" width="7.5" height="8" fill="#1d4d91"/><path d="M2 2 L5.5 6 M5.5 2 L2 6" stroke="#fff" stroke-width="1.1"/></g></svg>
<svg style="position:absolute;left:45px;top:278px;overflow:visible" width="16" height="16" viewBox="0 0 16 16"><g transform="translate(3 0)"><path d="M0.5 0.5 L11.5 0.5 L11.5 13.5 L0.5 13.5 Z" fill="#f4f8fc" stroke="#b4974e"/><path d="M3 2 L3 11 M3 5 L9 5 M3 8 L9 8 M3 11 L9 11" stroke="#2e9a4a"/><path d="M10 5 L10.5 5 M10 8 L10.5 8 M10 11 L10.5 11" stroke="#2e9a4a"/></g><g transform="translate(0 7)"><rect x="0" y="0" width="7.5" height="8" fill="#1d4d91"/><path d="M2 2 L5.5 6 M5.5 2 L2 6" stroke="#fff" stroke-width="1.1"/></g></svg>
<svg style="position:absolute;left:45px;top:303px;overflow:visible" width="16" height="16" viewBox="0 0 16 16"><g transform="translate(3 0)"><path d="M0.5 0.5 L11.5 0.5 L11.5 13.5 L0.5 13.5 Z" fill="#f4f8fc" stroke="#b4974e"/><path d="M3 2 L3 11 M3 5 L9 5 M3 8 L9 8 M3 11 L9 11" stroke="#2e9a4a"/><path d="M10 5 L10.5 5 M10 8 L10.5 8 M10 11 L10.5 11" stroke="#2e9a4a"/></g><g transform="translate(0 7)"><rect x="0" y="0" width="7.5" height="8" fill="#22a050"/><path d="M1.5 4 L3.3 6.3 L6.3 1.8" stroke="#fff" stroke-width="1.3" fill="none"/></g></svg>
<svg style="position:absolute;left:11px;top:536px;overflow:visible" width="12" height="10" viewBox="0 0 12 10"><g><rect x="0" y="0" width="12" height="2" rx="0.5" fill="#1f5ea8"/><rect x="0.5" y="2" width="11" height="1" fill="#aac6ea"/><rect x="0" y="4" width="12" height="2" rx="0.5" fill="#1f5ea8"/><rect x="0.5" y="6" width="11" height="1" fill="#aac6ea"/><rect x="0" y="8" width="12" height="2" rx="0.5" fill="#1f5ea8"/><rect x="0.5" y="10" width="11" height="1" fill="#aac6ea"/></g></svg>
<svg style="position:absolute;left:10px;top:589px;overflow:visible" width="12" height="10" viewBox="0 0 12 10"><g><rect x="0" y="0" width="12" height="2" rx="0.5" fill="#1f5ea8"/><rect x="0.5" y="2" width="11" height="1" fill="#aac6ea"/><rect x="0" y="4" width="12" height="2" rx="0.5" fill="#1f5ea8"/><rect x="0.5" y="6" width="11" height="1" fill="#aac6ea"/><rect x="0" y="8" width="12" height="2" rx="0.5" fill="#1f5ea8"/><rect x="0.5" y="10" width="11" height="1" fill="#aac6ea"/></g></svg>
<svg style="position:absolute;left:10px;top:614px;overflow:visible" width="12" height="10" viewBox="0 0 12 10"><g><rect x="0" y="0" width="12" height="2" rx="0.5" fill="#1f5ea8"/><rect x="0.5" y="2" width="11" height="1" fill="#aac6ea"/><rect x="0" y="4" width="12" height="2" rx="0.5" fill="#1f5ea8"/><rect x="0.5" y="6" width="11" height="1" fill="#aac6ea"/><rect x="0" y="8" width="12" height="2" rx="0.5" fill="#1f5ea8"/><rect x="0.5" y="10" width="11" height="1" fill="#aac6ea"/></g></svg>
<svg style="position:absolute;left:11px;top:562px;overflow:visible" width="11" height="15" viewBox="0 0 11 15"><path d="M2.5 0.8 L5 0.8 M4 0.8 L4 5.8 Q4 8 1 7.6" stroke="#2a62aa" stroke-width="1.7" fill="none"/><rect x="7.5" y="2.5" width="3" height="8" rx="1.5" fill="#f8d84a" stroke="#c49410"/><circle cx="9" cy="13.3" r="1.6" fill="#f8d84a" stroke="#c49410"/></svg>
<svg style="position:absolute;left:303px;top:529px;overflow:visible" width="26" height="26" viewBox="0 0 26 26"><defs><linearGradient id="pb2" x1="0" y1="0" x2="0" y2="1"><stop offset="0" stop-color="#e6e1db"/><stop offset="0.5" stop-color="#dbd4cd"/><stop offset="0.52" stop-color="#d3cbc2"/><stop offset="1" stop-color="#d9d2ca"/></linearGradient></defs><rect x="0.5" y="0.5" width="25" height="25" rx="4" fill="url(#pb2)" stroke="#6e645b"/><path d="M5.5 9.5 L11.5 9.5 M9 7 L11.5 9.5 L9 12 M5.5 17.5 L11.5 17.5 M9 15 L11.5 17.5 L9 20" stroke="#3c5670" stroke-width="1.1" fill="none"/><path d="M13.5 6 L13.5 11 M13.5 15.5 L13.5 20.5" stroke="#3c5670" stroke-width="1"/><rect x="14" y="11" width="8" height="1" fill="#1c5caa"/><rect x="14" y="13" width="8" height="1" fill="#1c5caa"/><rect x="14" y="15" width="8" height="1" fill="#1c5caa"/><rect x="14" y="12" width="8" height="1" fill="#b8cce6"/><rect x="14" y="14" width="8" height="1" fill="#b8cce6"/></svg>
<svg style="position:absolute;left:337px;top:535px;overflow:visible" width="15" height="15" viewBox="0 0 15 15"><g stroke="#c8c2bc" fill="#f2efec"><rect x="7.5" y="0.5" width="7" height="6"/><rect x="0.5" y="8.5" width="7" height="6"/></g><path d="M7.5 1 L7.5 3.5 M0.5 9 L0.5 11.5" stroke="#c8c2bc"/><path d="M5.5 3.5 L2 3.5 L2 6.5 M4 2 L5.5 3.5 L4 5 M0.8 5.5 L2 6.8 L3.2 5.5" stroke="#c8c2bc" fill="none"/></svg>
<svg style="position:absolute;left:371px;top:93px;overflow:visible" width="12" height="15" viewBox="0 0 12 15"><path d="M0.5 0.5 L8 0.5 L11.5 4 L11.5 14.5 L0.5 14.5 Z" fill="#eef3fb" stroke="#b4974e"/><path d="M8 0.5 L8 4 L11.5 4" fill="#f2d88e" stroke="#b4974e"/><path d="M6.5 3.5 L6.5 9.5 Q6.5 12 3.5 11.5" stroke="#2460a8" stroke-width="1.8" fill="none"/></svg>
<svg style="position:absolute;left:369px;top:640px;overflow:visible" width="15" height="15" viewBox="0 0 15 15"><path d="M0.5 0.5 L11 0.5 L13.5 2 L13.5 14.5 L0.5 14.5 Z" fill="#eef8fd" stroke="#6f7fa8"/><path d="M0.5 7.5 L13 7.5 M9 0.5 L9 14.5" stroke="#aab4cc"/><circle cx="5" cy="4" r="2.6" fill="#e02838"/><path d="M2 12.5 L5 8.5 L8 12.5 Z" fill="#eca22a"/><path d="M0.5 14.5 L0.5 0.5" stroke="#a09060"/></svg>
<svg style="position:absolute;left:459px;top:641px;overflow:visible" width="12" height="12" viewBox="0 0 12 12"><text x="0" y="10" font-family="Liberation Sans" font-weight="700" font-size="11.5" fill="#2a72c4" stroke="#2a72c4" stroke-width="0.6">@</text></svg>
<svg style="position:absolute;left:534px;top:640px;overflow:visible" width="15" height="16" viewBox="0 0 15 16"><path d="M0.5 0.5 L7.5 0.5 L10.5 3.5 L10.5 13 L0.5 13 Z" fill="#f4f8fc" stroke="#b48a2e"/><path d="M7.5 0.5 L7.5 3.5 L10.5 3.5" fill="#e8c46a" stroke="#b48a2e"/><path d="M4 2.5 Q2.5 3 3 5 Q3 6 2 6.5 Q3 7 3 8 Q2.5 10 4 10.5" stroke="#2460a8" fill="none"/><path d="M5 6 L8 6 M5 8 L8 8" stroke="#2460a8"/><path d="M6.5 11 L10 11 L10 9 L14.5 12.5 L10 16 L10 14 L6.5 14 Z" fill="#fbe38a" stroke="#c8941c" stroke-linejoin="round"/></svg>
</body></html>
